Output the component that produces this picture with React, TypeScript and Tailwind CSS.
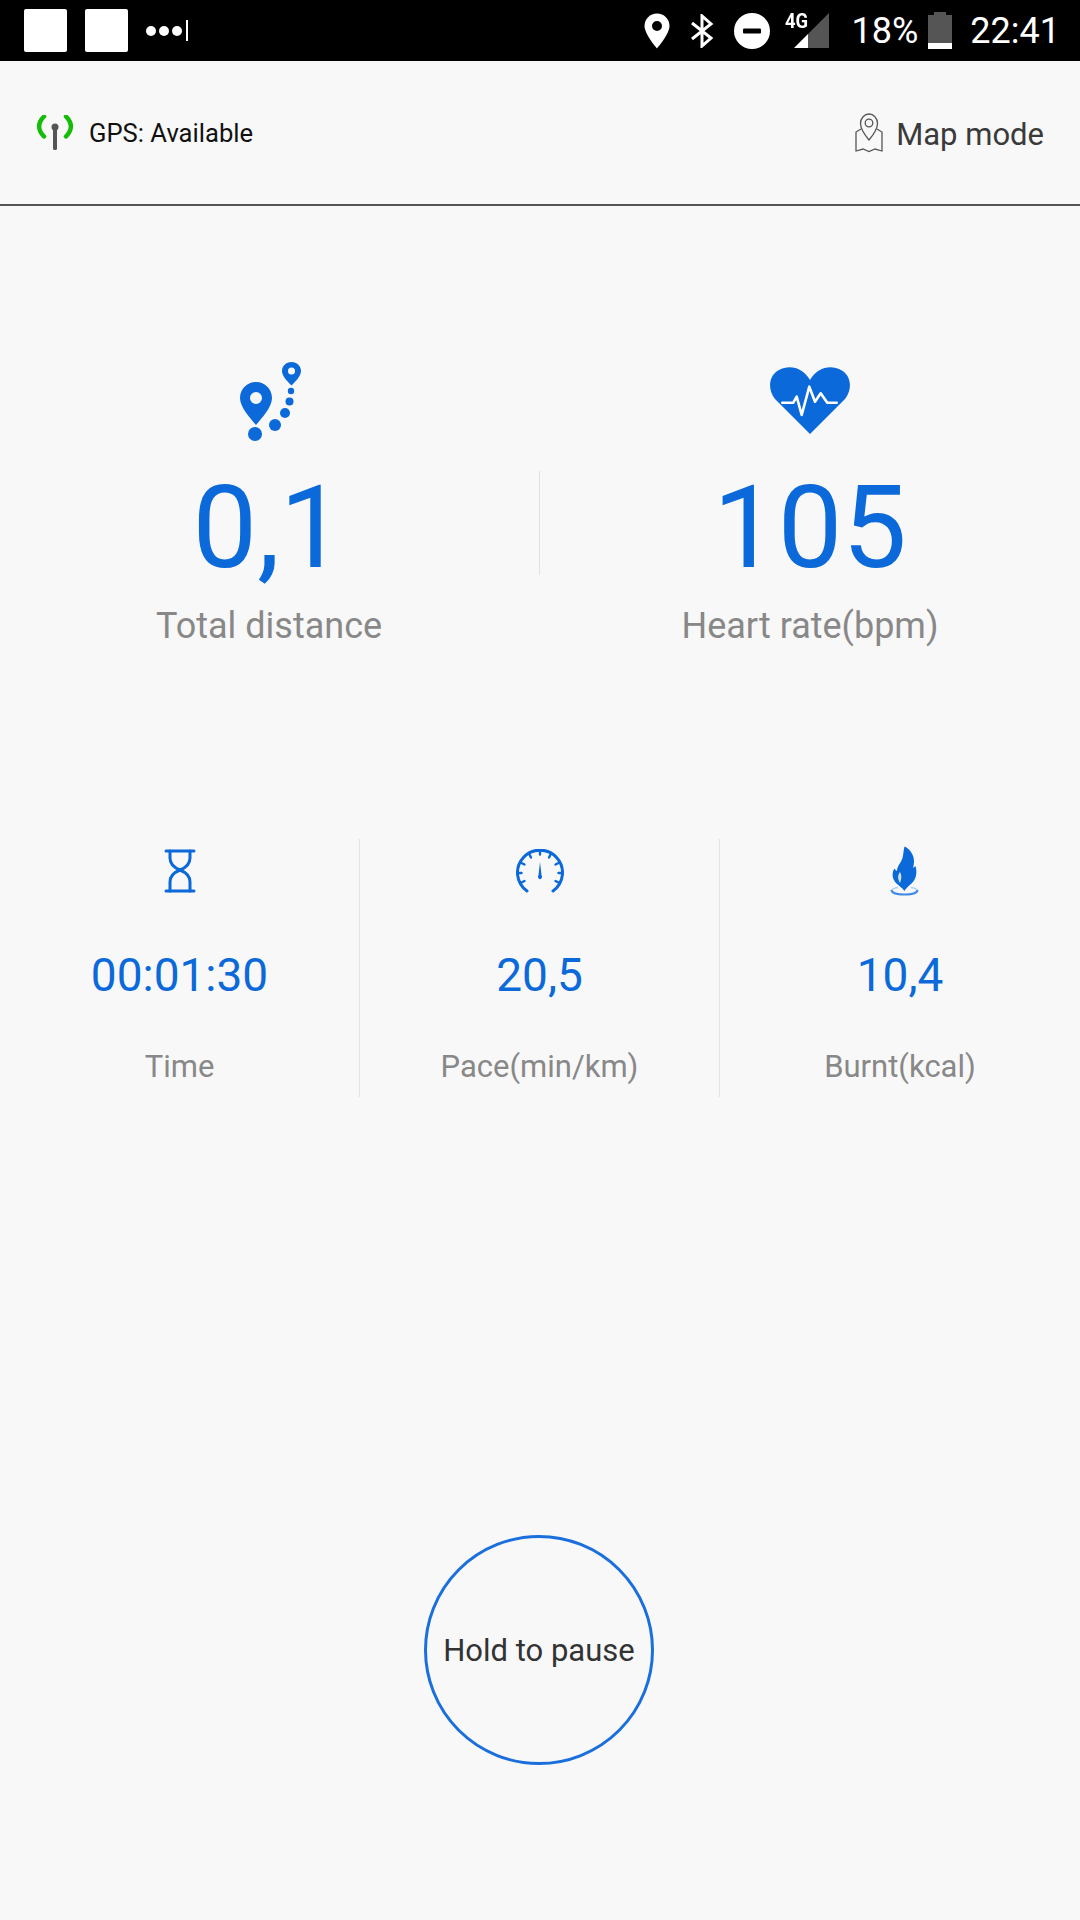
import React from "react";

const BLUE = "#0b69d9";

function StatusBar() {
  return (
    <div className="flex h-[61px] items-center justify-between bg-black pl-[24px] pr-[20px] text-white">
      <div className="flex items-center">
        <div className="h-[43px] w-[43px] rounded-[2px] bg-white" />
        <div className="ml-[18px] h-[43px] w-[43px] rounded-[2px] bg-white" />
        <div className="ml-[18px] flex items-center gap-[3px]">
          <span className="h-[10px] w-[10px] rounded-full bg-white" />
          <span className="h-[10px] w-[10px] rounded-full bg-white" />
          <span className="h-[10px] w-[10px] rounded-full bg-white" />
          <span className="ml-[1px] h-[21px] w-[2px] bg-white" />
        </div>
      </div>
      <div className="flex items-center">
        <svg width="26" height="36" viewBox="0 0 26 36">
          <path fillRule="evenodd" fill="#fff" d="M13 0.5C6 0.5 0.5 6 0.5 13 0.5 21 13 35.5 13 35.500S25.500 21 25.500 13C25.500 6 20 0.500 13 0.500ZM13 8a5 5 0 1 1 0 10 5 5 0 0 1 0-10Z" />
        </svg>
        <svg className="ml-[20px]" width="24" height="34" viewBox="0 0 24 34">
          <path fill="none" stroke="#fff" strokeWidth="3" d="M2 9L21 24L12 32V2L21 10L2 25" />
        </svg>
        <svg className="ml-[20px]" width="36" height="36" viewBox="0 0 36 36">
          <circle cx="18" cy="18" r="18" fill="#fff" />
          <rect x="9" y="15.500" width="18" height="5" rx="1" fill="#000" />
        </svg>
        <div className="relative ml-[15px] h-[36px] w-[44px]">
          <svg className="absolute left-0 top-0" width="44" height="36" viewBox="0 0 44 36">
            <path d="M44 0V35H23V21Z" fill="#555" />
            <path d="M23 21V35H9Z" fill="#fff" />
          </svg>
          <span className="absolute left-0 top-[-2px] origin-left font-['Roboto',sans-serif] text-[20px] font-bold leading-[20px] text-white [transform:scaleX(0.92)]">4G</span>
        </div>
        <span className="ml-[23px] font-['Roboto',sans-serif] text-[36px] leading-none">18%</span>
        <div className="ml-[10px] flex h-[37px] w-[24px] flex-col items-center">
          <div className="h-[3px] w-[12px] bg-[#555]" />
          <div className="w-full flex-1 bg-[#555]" />
          <div className="h-[6px] w-full bg-white" />
        </div>
        <span className="ml-[18px] font-['Roboto',sans-serif] text-[36px] leading-none">22:41</span>
      </div>
    </div>
  );
}

function Header() {
  return (
    <div className="flex h-[145px] items-center justify-between border-b-[2px] border-[#555] pl-[36px] pr-[36px]">
      <div className="flex items-center">
        <svg width="38" height="36" viewBox="0 0 38 36">
          <path d="M8 1.500C1.500 8 1.500 15 8 21.500" fill="none" stroke="#14bd08" strokeWidth="4.500" strokeLinecap="round" />
          <path d="M30 1.500C36.500 8 36.500 15 30 21.500" fill="none" stroke="#14bd08" strokeWidth="4.500" strokeLinecap="round" />
          <circle cx="19" cy="12" r="3.500" fill="#555" />
          <rect x="17" y="12" width="4" height="23" rx="1.500" fill="#555" />
        </svg>
        <span className="ml-[15px] mt-[3px] text-[25.6px] leading-none text-[#111]">GPS: Available</span>
      </div>
      <div className="flex items-center">
        <svg width="28" height="40" viewBox="0 0 28 40" fill="none" stroke="#555" strokeWidth="1.300">
          <path d="M14 27C9 21 5.500 16 5.500 10.500C5.500 5 9.500 1 14 1S22.500 5 22.500 10.500C22.500 16 19 21 14 27Z" />
          <circle cx="14" cy="10" r="3.800" />
          <path d="M6 16L1 19V38L8 36L14 38.500L20 36L27 38V19L22 16" />
        </svg>
        <span className="ml-[13px] mt-[3px] text-[31px] leading-none text-[#3a3a3a]">Map mode</span>
      </div>
    </div>
  );
}

function RouteIcon() {
  return (
    <svg width="66" height="80" viewBox="0 0 66 80" fill={BLUE} className="blur-[0.6px]">
      <path fillRule="evenodd" d="M19 21C10 21 3 28 3 37C3 46 13 57 19 64C25 57 35 46 35 37C35 28 28 21 19 21ZM19 31a6 6 0 1 1 0 12 6 6 0 0 1 0-12Z" />
      <circle cx="18" cy="73" r="7" />
      <circle cx="38" cy="64" r="6" />
      <circle cx="48" cy="52" r="5" />
      <circle cx="52.500" cy="40.500" r="4" />
      <circle cx="54" cy="30" r="3.200" />
      <path fillRule="evenodd" d="M54.500 1C49 1 45 5 45 10C45 15 50 20 54.500 24.500C59 20 64 15 64 10C64 5 60 1 54.500 1ZM54.500 6.500a3.500 3.500 0 1 1 0 7 3.500 3.500 0 0 1 0-7Z" />
    </svg>
  );
}

function HeartIcon() {
  return (
    <svg width="80" height="68" viewBox="0 0 80 68" className="mb-[6px]">
      <path fill={BLUE} d="M40 67L5 32C-3 22 -1 8 9 3C20 -3 33 1 40 13C47 1 60 -3 71 3C81 8 83 22 75 32Z" />
      <path fill="none" stroke="#fff" strokeWidth="2.600" strokeLinecap="round" strokeLinejoin="round" d="M12.300 35.700H23.300L26.700 29.700L31.700 48L39.300 19.700L45 34.700L50.700 26.300L57.300 35.700H66.700" />
    </svg>
  );
}

function HourglassIcon() {
  return (
    <svg width="32" height="44" viewBox="0 0 32 44" fill="none" stroke={BLUE} strokeWidth="3" strokeLinecap="round">
      <path d="M2 2H30M2 42H30" />
      <path d="M6 2V9Q6 17 16 21Q26 17 26 9V2" />
      <path d="M6 42V33Q6 25 16 21Q26 25 26 33V42" />
    </svg>
  );
}

function GaugeIcon() {
  return (
    <svg width="48" height="44" viewBox="0 0 48 44" fill="none" stroke={BLUE}>
      <path strokeWidth="3" strokeLinecap="round" d="M11 42A22.500 22.500 0 1 1 37 42" />
      <g strokeWidth="2.400" strokeLinecap="round">
        <path d="M24 2V5.500M13.500 5.500L15 8.500M34.500 5.500L33 8.500M5.500 14L8.500 15.500M42.500 14L39.500 15.500M2 24H5.500M46 24H42.500M5.500 33.500L8.500 32M42.500 33.500L39.500 32" />
      </g>
      <path fill={BLUE} stroke="none" d="M24 13L25.500 26A2 2.500 0 1 1 22.500 26Z" />
    </svg>
  );
}

function FlameIcon() {
  return (
    <svg width="32" height="50" viewBox="0 0 32 50" className="ml-[9px] blur-[0.6px]">
      <path fill={BLUE} fillRule="evenodd" d="M15.500 0.500C21 3 25 9 25 15C25 18 24.500 20 24 22C25.500 21 26 20.500 26.500 20C28.500 27 27 33 23 37C20 40 17 42 15.300 45C13 41 8 39 5.500 35C3 31 3 26 5.500 22.500C6.500 24 7 24.500 8 25C8 20 12 17 13.500 12C14.500 8 14.500 4 15.500 0.500Z" />
      <path fill="#cfe2f8" d="M11 26C8.500 29 8.500 33 11 37C12.500 33 13 29 11 26Z" />
      <path d="M2.500 44C2.500 50 28.500 50 28.500 44" fill="none" stroke="#3f8be4" strokeWidth="2" />
      <path d="M2.500 44C5 42 7 41.500 9 41.500M28.500 44C26 42 24 41.500 22 41.500" fill="none" stroke="#a9ccf3" strokeWidth="1.500" />
    </svg>
  );
}

function BigStat({ icon, value, label, border }: { icon: React.ReactNode; value: string; label: string; border?: boolean }) {
  return (
    <div className="flex w-1/2 flex-col items-center">
      <div className="flex h-[80px] items-end">{icon}</div>
      <div className="relative mt-[30px] flex h-[104px] w-full items-center justify-center pt-[8px]">
        {border && <div className="absolute bottom-0 right-0 top-0 w-[1px] bg-[#e0e0e0]" />}
        <span className={`text-[115px] leading-none text-[#0b69d9] ${border ? "mr-[3px]" : ""}`}>{value}</span>
      </div>
      <span className={`mt-[33px] text-[36px] leading-none text-[#888] ${border ? "mr-[2px]" : ""}`}>{label}</span>
    </div>
  );
}

function SmallStat({ icon, value, label, border }: { icon: React.ReactNode; value: string; label: string; border?: boolean }) {
  return (
    <div className={`flex w-1/3 flex-col items-center pt-[6px] ${border ? "border-r border-[#e4e4e4]" : ""}`}>
      <div className="flex h-[52px] items-center">{icon}</div>
      <span className="mt-[55px] text-[46px] leading-none text-[#0b69d9]">{value}</span>
      <span className="mt-[53px] text-[31px] leading-none text-[#888]">{label}</span>
    </div>
  );
}

export default function App() {
  return (
    <div className="flex h-[1920px] w-[1080px] flex-col bg-[#f8f8f8] font-['Roboto',sans-serif]">
      <StatusBar />
      <Header />
      <div className="mt-[155px] flex">
        <BigStat icon={<RouteIcon />} value="0,1" label="Total distance" border />
        <BigStat icon={<HeartIcon />} value="105" label="Heart rate(bpm)" />
      </div>
      <div className="mt-[195px] flex h-[258px]">
        <SmallStat icon={<HourglassIcon />} value="00:01:30" label="Time" border />
        <SmallStat icon={<GaugeIcon />} value="20,5" label="Pace(min/km)" border />
        <SmallStat icon={<FlameIcon />} value="10,4" label="Burnt(kcal)" />
      </div>
      <div className="mt-[438px] flex justify-center">
        <div className="mr-[2px] flex h-[230px] w-[230px] items-center justify-center rounded-full border-[3px] border-[#1a6fdc]">
          <span className="text-[31px] leading-none text-[#333]">Hold to pause</span>
        </div>
      </div>
    </div>
  );
}
